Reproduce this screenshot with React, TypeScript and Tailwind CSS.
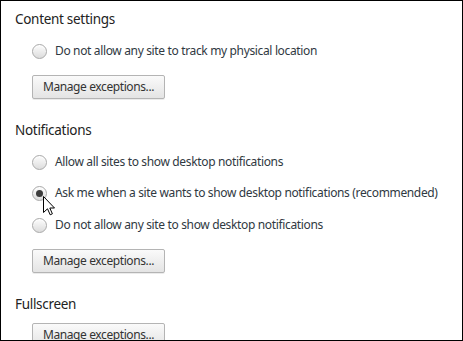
import React from "react";

const font = { fontFamily: '"Noto Sans", "Open Sans", sans-serif' };

function Radio({ checked = false }: { checked?: boolean }) {
  return (
    <span className="relative flex h-[15px] w-[15px] shrink-0 items-center justify-center rounded-full border border-[#a9a9a9] bg-gradient-to-b from-[#fdfdfd] to-[#dcdcdc] shadow-[inset_0_1px_1px_rgba(255,255,255,0.9)]">
      {checked && <span className="h-[7px] w-[7px] rounded-full bg-[#3c3c3c]" />}
    </span>
  );
}

function Option({ label, checked = false, className = "" }: { label: string; checked?: boolean; className?: string }) {
  return (
    <div className={`flex h-[20px] items-center pl-[17px] ${className}`}>
      <Radio checked={checked} />
      <span className="ml-[8px] text-[12px] tracking-[-0.35px] text-[#303942]">{label}</span>
    </div>
  );
}

function ManageButton({ className = "" }: { className?: string }) {
  return (
    <div className={`pl-[17px] ${className}`}>
      <button className="flex h-[24px] w-[133px] items-center justify-center rounded-[2px] border border-[#b4b4b4] bg-gradient-to-b from-[#fafafa] to-[#e4e4e4] text-[12px] tracking-[-0.4px] text-[#333] shadow-[0_1px_0_rgba(0,0,0,0.08)]">
        Manage exceptions...
      </button>
    </div>
  );
}

function Heading({ children, className = "" }: { children: React.ReactNode; className?: string }) {
  return (
    <div className={`flex h-[20px] items-center text-[13.5px] tracking-[-0.3px] text-[#222] ${className}`}>
      {children}
    </div>
  );
}

export default function App() {
  return (
    <div style={font} className="relative h-[341px] w-[463px] overflow-hidden border border-black bg-white">
      <div className="pl-[14px] pt-[8px]">
        <Heading>Content settings</Heading>
        <Option className="mt-[12px]" label="Do not allow any site to track my physical location" />
        <ManageButton className="mt-[14px]" />

        <Heading className="mt-[21px]">Notifications</Heading>
        <Option className="mt-[12px]" label="Allow all sites to show desktop notifications" />
        <Option className="mt-[11px]" checked label="Ask me when a site wants to show desktop notifications (recommended)" />
        <Option className="mt-[12px]" label="Do not allow any site to show desktop notifications" />
        <ManageButton className="mt-[14px]" />

        <Heading className="mt-[21px]">Fullscreen</Heading>
        <ManageButton className="mt-[9px]" />
      </div>

      {/* mouse pointer */}
      <svg className="absolute left-[42px] top-[195px]" width="13" height="20" viewBox="0 0 13 20">
        <path d="M0.5 0.5 L0.5 16.5 L4.5 12.8 L7.2 18.8 L9.4 17.8 L6.8 12 L11.5 12 Z" fill="white" stroke="black" strokeWidth="1" strokeLinejoin="miter" />
      </svg>
    </div>
  );
}
